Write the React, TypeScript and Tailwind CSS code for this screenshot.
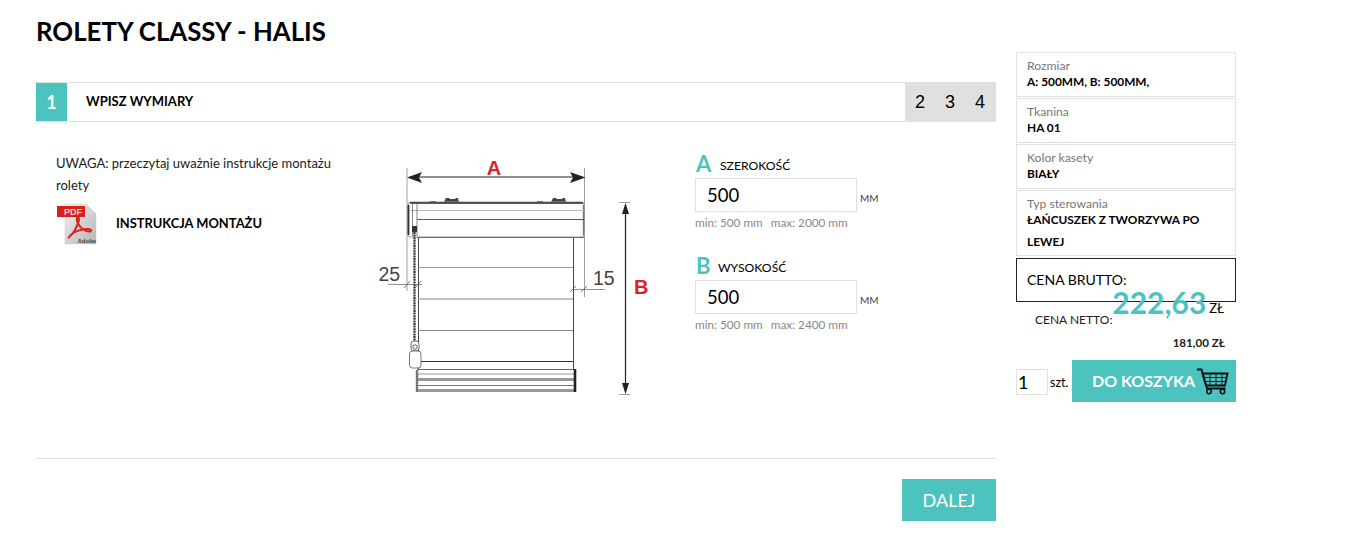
const teal = 'bg-[#4dc3bf]';

function PdfIcon() {
  return (
    <svg width="42" height="42" viewBox="0 0 42 42" className="shrink-0">
      <defs>
        <linearGradient id="page" x1="0" y1="0" x2="1" y2="1">
          <stop offset="0" stopColor="#f2f2f2" />
          <stop offset="1" stopColor="#b4b4b4" />
        </linearGradient>
      </defs>
      <path d="M9 1H30L40 11V41H9Z" fill="url(#page)" stroke="#c8c8c8" strokeWidth="0.5" />
      <path d="M30 1V11H40Z" fill="#d6d6d6" />
      <rect x="1" y="3" width="28" height="11" fill="#d8201e" />
      <text x="8" y="12" fontSize="9" fontWeight="700" fill="#f6d0cc" fontFamily="'Liberation Sans', sans-serif">PDF</text>
      <path
        d="M13 34C17 31 21 24 23 17C23 14 22 13 21 15C20 18 23 24 28 27C31 29 36 29 35 27C33 25 24 26 17 30C14 32 12 36 13 34Z"
        fill="none"
        stroke="#d8201e"
        strokeWidth="2"
      />
      <text x="21.5" y="40" fontSize="6" fontWeight="700" fill="#444" fontFamily="'Liberation Sans', sans-serif">Adobe</text>
    </svg>
  );
}

function CartIcon() {
  return (
    <svg width="32" height="27" viewBox="0 0 32 27" fill="none" stroke="#111" className="shrink-0">
      <path d="M0 1.5H4.5L10 20.5H28.5" strokeWidth="1.8" />
      <path d="M5.5 5.5H30.5L28 17.5H9Z" strokeWidth="1.8" />
      <path d="M7 9.5H29.5M8.5 13.5H29M13 6V17M19 6V17M25 6V17" strokeWidth="0.9" />
      <circle cx="12" cy="23.5" r="2.2" strokeWidth="1.6" />
      <circle cx="25.5" cy="23.5" r="2.2" strokeWidth="1.6" />
    </svg>
  );
}

function BlindDiagram() {
  return (
    <svg width="290" height="250" viewBox="370 150 290 250" className="shrink-0" fill="none">
      {/* wymiar A */}
      <path d="M407 168V291M584.5 168V297" stroke="#888" strokeWidth="0.8" />
      <path d="M410 177H582" stroke="#222" strokeWidth="1.2" />
      <path d="M407 177.5L422 172L419 177.5L422 183Z M585.5 177.5L570 172L573 177.5L570 183Z" fill="#222" />
      <text x="494" y="175" textAnchor="middle" fontSize="20" fontWeight="700" fill="#d9232e" fontFamily="'Liberation Sans', sans-serif">A</text>

      {/* wsporniki */}
      <path d="M430 201.5H436M537 201.5H543" stroke="#555" strokeWidth="1.2" />
      <path d="M444 202L446 198H449L450 199H455L456 198H458L459 202Z M551 202L553 198H556L557 199H562L563 198H565L566 202Z" fill="#444" />

      {/* kaseta */}
      <rect x="408" y="202" width="176" height="35" rx="3" stroke="#999" strokeWidth="1" />
      <path d="M410 203H583" stroke="#222" strokeWidth="1.6" />
      <path d="M408.5 205V235" stroke="#333" strokeWidth="1.8" />
      <path d="M583.5 205V235" stroke="#777" strokeWidth="1.4" />
      <path d="M410 210.5H584" stroke="#bbb" strokeWidth="1" />
      <path d="M417 219.5H584" stroke="#444" strokeWidth="0.9" />
      <path d="M412.5 204V236M417 204V236" stroke="#666" strokeWidth="0.8" />
      <path d="M417 237.5H584" stroke="#555" strokeWidth="0.8" />

      {/* tkanina */}
      <path d="M418.5 238V369M573.5 238V369" stroke="#444" strokeWidth="1" />
      <path d="M418 267.5H573" stroke="#999" strokeWidth="1" />
      <path d="M418 299H573" stroke="#aaa" strokeWidth="1.4" />
      <path d="M418 330.5H573" stroke="#888" strokeWidth="1" />
      <path d="M420 361.5H573" stroke="#333" strokeWidth="1" />

      {/* dolna listwa */}
      <path d="M417 369.5H574" stroke="#666" strokeWidth="1" />
      <path d="M418 374H574" stroke="#ccc" strokeWidth="2" />
      <path d="M418 379.5H574" stroke="#999" strokeWidth="3" />
      <path d="M418 385.5H574" stroke="#777" strokeWidth="1" />
      <path d="M418 390.5H574" stroke="#999" strokeWidth="3" />
      <path d="M417 370V392" stroke="#777" strokeWidth="2.4" />
      <path d="M575 369V392" stroke="#222" strokeWidth="2.6" />

      {/* lancuszek */}
      <rect x="412" y="226" width="5" height="6" fill="#333" />
      <path d="M414.5 232V342" stroke="#333" strokeWidth="2.2" strokeDasharray="2 0.6" />
      <rect x="411" y="341" width="8" height="10" rx="3" fill="#fff" stroke="#444" strokeWidth="0.8" />
      <circle cx="415" cy="347" r="2.2" stroke="#333" strokeWidth="0.8" />
      <rect x="409.5" y="351" width="11.5" height="17" rx="3" fill="#fff" stroke="#555" strokeWidth="0.8" />

      {/* wymiar 25 */}
      <path d="M388 284.5H422" stroke="#777" strokeWidth="0.8" />
      <path d="M404 288L410 281M415 288L421 281" stroke="#444" strokeWidth="0.7" />
      <text x="378.5" y="280.5" fontSize="19.5" fill="#444" fontFamily="'Liberation Sans', sans-serif">25</text>

      {/* wymiar 15 */}
      <path d="M572 289.5H605" stroke="#777" strokeWidth="0.8" />
      <path d="M570 292L576 286M581 292L587 286" stroke="#444" strokeWidth="0.7" />
      <text x="593" y="285" fontSize="19.5" fill="#444" fontFamily="'Liberation Sans', sans-serif">15</text>

      {/* wymiar B */}
      <path d="M619 202.5H630M619 394.5H630" stroke="#888" strokeWidth="0.8" />
      <path d="M625.5 205V392" stroke="#222" strokeWidth="1.2" />
      <path d="M625.5 203L622 214H629Z M625.5 394L622 383H629Z" fill="#222" />
      <text x="634" y="294" fontSize="20" fontWeight="700" fill="#d9232e" fontFamily="'Liberation Sans', sans-serif">B</text>
    </svg>
  );
}

function DimensionField({ letter, label, limits, gapClass }: { letter: string; label: string; limits: [string, string]; gapClass: string }) {
  return (
    <div>
      <div className="flex items-center h-[26px]">
        <span className="text-[#4dc3bf] text-[22px] leading-none font-bold w-[24px] pl-[1px]">{letter}</span>
        <span className={`text-[12.2px] leading-none mt-[4px] ${gapClass}`}>{label}</span>
      </div>
      <div className="flex items-end mt-[1px]">
        <input
          readOnly
          value="500"
          className="w-[162px] h-[34px] border border-[#e0e0e0] pl-[11px] text-[18.5px] text-black outline-none"
        />
        <span className="text-[10px] ml-[3px] mb-[6px] text-[#444]">MM</span>
      </div>
      <div className="flex gap-[8px] text-[11.75px] leading-none text-[#888] mt-[5px]">
        <span>{limits[0]}</span>
        <span>{limits[1]}</span>
      </div>
    </div>
  );
}

function SummaryCard({ label, lines }: { label: string; lines: string[] }) {
  return (
    <div className="border border-[#e2e2e2] px-[10px] pt-[5px] pb-[2px] min-h-[45px]">
      <div className="text-[12.2px] leading-[15px] text-[#777]">{label}</div>
      <div className="-mt-[2px]">
        {lines.map(line => (
          <div key={line} className="text-[11.85px] leading-[22px] font-bold text-black">{line}</div>
        ))}
      </div>
    </div>
  );
}

export default function App() {
  return (
    <div className="w-[1361px] h-[554px] overflow-hidden bg-white text-black font-['Lato','Open_Sans',sans-serif] flex pl-[36px]">
      <div className="w-[960px] shrink-0">
        <h1 className="text-[25.8px] leading-[32px] font-bold mt-[15px]">ROLETY CLASSY - HALIS</h1>

        <div className="mt-[35px] h-[40px] border-y border-[#e2e2e2] flex items-stretch">
          <div className={`w-[31px] ${teal} text-white font-bold text-[18px] flex items-center justify-center`}>1</div>
          <div className="flex-1 pl-[19px] flex items-center text-[13px] font-bold">WPISZ WYMIARY</div>
          <div className="w-[91px] bg-[#e0e0e0] flex items-center justify-around pr-[1px] text-[18px] font-['Liberation_Sans',sans-serif]">
            <span>2</span>
            <span>3</span>
            <span>4</span>
          </div>
        </div>

        <div className="flex h-[337px] border-b border-[#e2e2e2] pt-[28px]">
          <div className="w-[334px] shrink-0 pl-[20px] pr-[3px] pt-[2px]">
            <p className="text-[13px] leading-[22px] text-[#1a1a1a]">UWAGA: przeczytaj uważnie instrukcje montażu rolety</p>
            <div className="flex items-center gap-[18px] mt-[7px]">
              <PdfIcon />
              <span className="text-[12.9px] font-bold">INSTRUKCJA MONTAŻU</span>
            </div>
          </div>
          <BlindDiagram />
          <div className="pl-[35px] pt-[1px] flex flex-col gap-[24px]">
            <DimensionField letter="A" label="SZEROKOŚĆ" limits={['min: 500 mm', 'max: 2000 mm']} gapClass="ml-[1px]" />
            <DimensionField letter="B" label="WYSOKOŚĆ" limits={['min: 500 mm', 'max: 2400 mm']} gapClass="-ml-[1px]" />
          </div>
        </div>

        <div className="flex justify-end mt-[20px]">
          <button className={`w-[94px] h-[42px] ${teal} text-white text-[18px]`}>DALEJ</button>
        </div>
      </div>

      <div className="w-[220px] ml-[20px] pt-[52px] shrink-0">
        <div className="flex flex-col gap-[1px]">
          <SummaryCard label="Rozmiar" lines={['A: 500MM, B: 500MM,']} />
          <SummaryCard label="Tkanina" lines={['HA 01']} />
          <SummaryCard label="Kolor kasety" lines={['BIAŁY']} />
          <SummaryCard label="Typ sterowania" lines={['ŁAŃCUSZEK Z TWORZYWA PO', 'LEWEJ']} />
        </div>

        <div className="h-[44px] mt-[2px] border border-[#222] px-[10px] pt-[11px] text-[14px] leading-[20px]">CENA BRUTTO:</div>

        <div className="flex justify-end items-end pr-[12px] -mt-[18px] relative">
          <span className="text-[#4dc3bf] text-[30px] leading-[36px] font-bold">222,63</span>
          <span className="text-[13px] ml-[3px] mb-[2px]">ZŁ</span>
        </div>
        <div className="text-[12px] leading-[16px] pl-[19px] -mt-[8px] text-[#222]">CENA NETTO:</div>
        <div className="text-[11.6px] leading-[16px] font-bold text-right pr-[11px] mt-[7px] text-[#222]">181,00 ZŁ</div>

        <div className="flex items-center mt-[9px]">
          <input readOnly value="1" className="w-[32px] h-[26px] mt-[2px] border border-[#e2e2e2] text-[18px] pl-[1px] outline-none" />
          <span className="text-[12.5px] ml-[2px] mt-[5px] w-[21px]">szt.</span>
          <button className={`ml-[1px] w-[164px] h-[42px] ${teal} flex items-center pl-[20px] text-white font-bold text-[16px]`}>
            DO KOSZYKA
            <span className="ml-[2px]"><CartIcon /></span>
          </button>
        </div>
      </div>
    </div>
  );
}
